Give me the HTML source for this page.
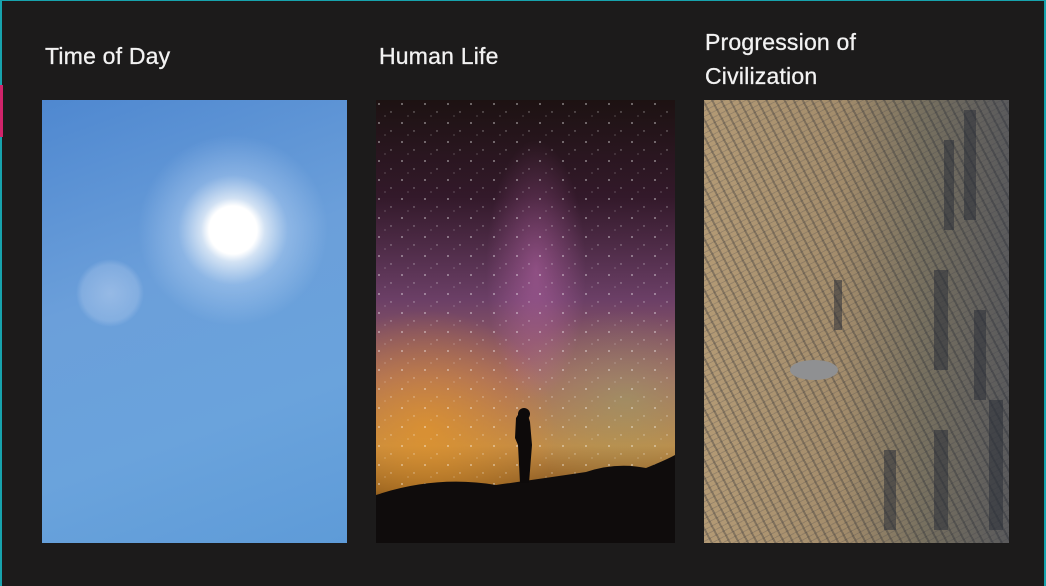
<!DOCTYPE html>
<html><head><meta charset="utf-8"><style>
html,body{margin:0;padding:0}
body{width:1046px;height:586px;background:#1c1b1b;position:relative;overflow:hidden;font-family:"Liberation Sans",sans-serif}
.frame{position:absolute;left:0;top:0;width:1046px;height:586px;box-sizing:border-box;border-left:2px solid #17a3ad;border-top:1px solid #17a3ad;border-right:2px solid #17a3ad}
.pink{position:absolute;left:0;top:85px;width:3px;height:52px;background:#d0246a}
.t{position:absolute;color:#f2f2f2;font-size:23px;letter-spacing:0.2px;-webkit-text-stroke:0.3px #f2f2f2}
.img{position:absolute;top:100px;height:443px}
#sky{left:42px;width:305px;background:
radial-gradient(circle at 191px 130px,#fff 0,#fff 24px,rgba(255,255,255,.7) 32px,rgba(220,235,255,.3) 55px,rgba(200,225,255,0) 95px),
radial-gradient(circle at 68px 193px,rgba(230,235,250,.35) 0,rgba(230,235,250,.2) 28px,rgba(230,235,250,0) 34px),
linear-gradient(160deg,#4f88d0 0%,#6b9fda 40%,#6aa3dc 70%,#5e9bd8 100%)}
#night{left:376px;width:299px;overflow:hidden;background:
radial-gradient(ellipse 50px 130px at 160px 170px,rgba(220,120,200,.4),rgba(220,120,200,0)),
radial-gradient(ellipse 130px 120px at 50px 330px,rgba(230,150,40,.7),rgba(230,150,40,0)),
radial-gradient(ellipse 120px 90px at 250px 300px,rgba(150,170,110,.45),rgba(150,170,110,0)),
linear-gradient(180deg,#1d1212 0%,#33192a 22%,#6b3f66 45%,#a36a62 63%,#c08a48 78%,#8a5a20 88%,#1a1210 95%)}
#city{left:704px;width:305px;overflow:hidden;background:
repeating-linear-gradient(62deg,rgba(30,35,45,0) 0 6px,rgba(30,35,45,.3) 6px 8px),
repeating-linear-gradient(-28deg,rgba(240,220,180,0) 0 4px,rgba(60,60,70,.22) 4px 5px),
linear-gradient(90deg,#b39a75 0%,#a38c6b 45%,#77705f 72%,#5a5a5c 100%)}
</style></head><body>
<div class="frame"></div><div class="pink"></div>
<div class="t" style="left:45px;top:43px">Time of Day</div>
<div class="t" style="left:379px;top:43px">Human Life</div>
<div class="t" style="left:705px;top:25px;line-height:34px">Progression of<br>Civilization</div>
<div class="img" id="sky"></div>
<div class="img" id="night">
<svg width="299" height="443" style="position:absolute;left:0;top:0">
<defs><pattern id="st" width="23" height="19" patternUnits="userSpaceOnUse"><circle cx="3" cy="4" r=".9" fill="#fff" opacity=".6"/><circle cx="15" cy="12" r=".7" fill="#fff" opacity=".5"/><circle cx="9" cy="16" r=".6" fill="#fff" opacity=".4"/></pattern></defs>
<rect width="299" height="400" fill="url(#st)"/>
<path d="M0 395 Q60 375 120 385 Q170 378 210 372 Q240 362 270 368 Q290 360 299 355 L299 443 L0 443Z" fill="#0f0c0c"/>
<path d="M144 383 L142 345 L139 338 L140 318 L145 310 L151 312 L154 322 L156 345 L153 383Z" fill="#0d0a0a"/>
<circle cx="148" cy="314" r="6" fill="#0d0a0a"/>
</svg>
</div>
<div class="img" id="city">
<svg width="305" height="443" style="position:absolute;left:0;top:0">
<ellipse cx="110" cy="270" rx="24" ry="10" fill="#8f9092"/>
<g fill="#2b2f38" opacity=".55">
<rect x="240" y="40" width="10" height="90"/><rect x="260" y="10" width="12" height="110"/><rect x="230" y="170" width="14" height="100"/><rect x="270" y="210" width="12" height="90"/><rect x="180" y="350" width="12" height="80"/><rect x="230" y="330" width="14" height="100"/><rect x="285" y="300" width="14" height="130"/><rect x="130" y="180" width="8" height="50"/>
</g>
</svg>
</div>
</body></html>
